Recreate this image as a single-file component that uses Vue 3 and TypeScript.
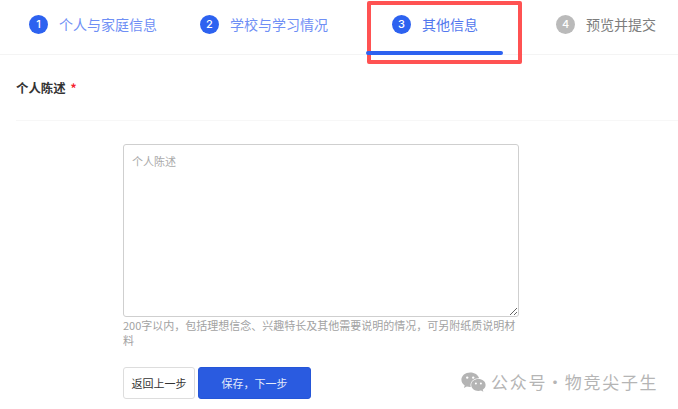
<script setup lang="ts">
import { ref } from 'vue'

const steps = [
  { no: 1, title: '个人与家庭信息', state: 'done' },
  { no: 2, title: '学校与学习情况', state: 'done' },
  { no: 3, title: '其他信息', state: 'active' },
  { no: 4, title: '预览并提交', state: 'todo' },
]

const statement = ref('')
</script>

<template>
  <div class="page">
    <nav class="steps">
      <div v-for="s in steps" :key="s.no" class="step" :class="s.state">
        <span class="num">{{ s.no }}</span>
        <span class="title">{{ s.title }}</span>
      </div>
    </nav>

    <div class="section-head">
      <span class="section-title">个人陈述</span>
      <span class="star">*</span>
    </div>

    <form class="form" @submit.prevent>
      <textarea v-model="statement" class="input" placeholder="个人陈述"></textarea>
      <p class="hint">200字以内，包括理想信念、兴趣特长及其他需要说明的情况，可另附纸质说明材料</p>
      <div class="actions">
        <button type="button" class="btn">返回上一步</button>
        <button type="submit" class="btn primary">保存，下一步</button>
      </div>
    </form>

    <!-- annotation box drawn on top of the screenshot -->
    <div class="callout"></div>

    <div class="watermark">
      <svg class="wechat" width="25" height="21" viewBox="0 0 25 21">
        <path fill="#b4b4b4" d="M9.2 0.6C4.3 0.6 0.4 3.8 0.4 7.8c0 2.3 1.3 4.3 3.3 5.6l-0.8 2.5 2.9-1.5c1 0.3 2.2 0.5 3.4 0.5h0.6c-0.2-0.6-0.3-1.2-0.3-1.9 0-3.8 3.6-6.8 8-6.8h0.6C17.3 3 13.6 0.6 9.2 0.6z" />
        <path fill="#b4b4b4" d="M24.6 13c0-3.3-3.2-5.9-7.2-5.9s-7.2 2.6-7.2 5.9 3.2 5.9 7.2 5.9c0.9 0 1.8-0.1 2.6-0.4l2.4 1.3-0.7-2.1c1.8-1.1 2.9-2.8 2.9-4.7z" />
        <circle cx="6.2" cy="5.6" r="1.2" fill="#fff" />
        <circle cx="12.2" cy="5.6" r="1.2" fill="#fff" />
        <circle cx="14.9" cy="11.6" r="1" fill="#fff" />
        <circle cx="19.9" cy="11.6" r="1" fill="#fff" />
      </svg>
      <span class="wm-text">公众号 · 物竞尖子生</span>
    </div>
  </div>
</template>

<style scoped>
.page {
  position: relative;
  width: 678px;
  height: 409px;
  overflow: hidden;
  background: #fff;
  font-family: "Noto Sans CJK SC", "Noto Sans", sans-serif;
}

.steps {
  display: grid;
  grid-template-columns: 171px 167px 189px 1fr;
  height: 54px;
  padding-left: 29px;
  border-bottom: 1px solid #f4f4f4;
}

.step {
  position: relative;
  display: flex;
  align-items: flex-start;
  gap: 11px;
  padding-top: 15px;
  font-size: 14px;
  line-height: 19px;
  white-space: nowrap;
  color: #6f8ff5;
}

.num {
  flex: none;
  width: 19px;
  height: 19px;
  border-radius: 50%;
  background: #2d62f0;
  color: #fff;
  font-family: Inter, "Noto Sans", sans-serif;
  font-size: 11px;
  font-weight: 500;
  line-height: 19px;
  text-align: center;
}

.step.active {
  padding-left: 25px;
  width: 136px;
  box-sizing: border-box;
  color: #5378ee;
}

/* the underline sits above the red annotation box */
.step.active::after {
  content: '';
  position: absolute;
  z-index: 1;
  left: -1px;
  right: 0;
  bottom: -1px;
  height: 4px;
  border-radius: 2px;
  background: #2d62f0;
}

.step.todo {
  color: #7d7d7d;
}

.step.todo .num {
  background: #bababa;
}

.section-head {
  display: flex;
  align-items: center;
  gap: 5px;
  height: 66px;
  margin-left: 16px;
  padding-bottom: 1px;
  box-sizing: border-box;
  border-bottom: 1px solid #f7f7f7;
}

.section-title {
  font-size: 12.4px;
  font-weight: 700;
  color: #333;
  padding-top: 1px;
}

.star {
  font-size: 12px;
  font-weight: 700;
  color: #f5222d;
}

.form {
  display: flex;
  flex-direction: column;
  width: 396px;
  margin-left: 123px;
  padding-top: 23px;
}

.input {
  display: block;
  width: 396px;
  height: 173px;
  box-sizing: border-box;
  margin: 0;
  padding: 8px 8px;
  border: 1px solid #cfcfcf;
  border-radius: 3px;
  outline: none;
  font-family: inherit;
  font-size: 11px;
  line-height: 17px;
  color: #333;
  background: #fff;
}

.input::placeholder {
  color: #aaa;
}

.hint {
  width: 396px;
  margin: 0;
  padding-top: 1px;
  font-size: 11px;
  line-height: 15px;
  color: #a2a2a2;
}

.actions {
  display: flex;
  align-items: flex-start;
  gap: 3px;
  margin-top: 19px;
}

.btn {
  width: 72px;
  height: 32px;
  padding: 0;
  border: 1px solid #ddd;
  border-radius: 3px;
  background: #fff;
  color: #333;
  font-family: inherit;
  font-size: 11px;
}

.btn.primary {
  width: 113px;
  border-color: #2556d8;
  background: #2a5be0;
  color: #e4ebfb;
}

.callout {
  position: absolute;
  left: 367px;
  top: 1px;
  width: 155px;
  height: 63px;
  box-sizing: border-box;
  border: 4px solid #ff5252;
  border-radius: 2px;
}

.watermark {
  position: absolute;
  left: 461px;
  top: 370px;
  display: flex;
  align-items: center;
  gap: 5px;
  color: #b5b5b5;
}

.wm-text {
  font-size: 17px;
  line-height: 24px;
  letter-spacing: 1.7px;
  word-spacing: -6px;
  white-space: nowrap;
}
</style>

<style>
html, body {
  margin: 0;
  background: #fff;
}
</style>
